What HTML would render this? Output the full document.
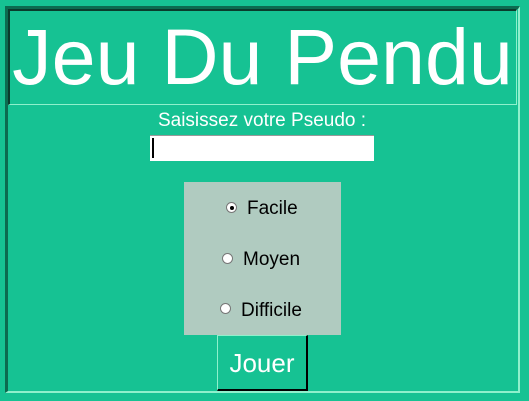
<!DOCTYPE html>
<html><head><style>
body{margin:0;width:529px;height:401px;background:#16c293;position:relative;overflow:hidden;font-family:"Liberation Sans",Arial,sans-serif}
.a{position:absolute;box-sizing:border-box}
</style></head><body>
<div class="a" style="left:5px;top:6px;width:515px;height:387px;border-top:3px solid #0c6b50;border-left:3px solid #0c6b50;border-right:2px solid #8ff0cc;border-bottom:2px solid #8ff0cc"></div>
<div class="a" style="left:8px;top:9px;width:509px;height:96px;border-top:2px solid #0a3b2c;border-left:2px solid #0a3b2c;border-right:1px solid #8ff0cc;border-bottom:1px solid #8ff0cc"></div>
<div class="a" style="left:8px;top:17px;width:509px;text-align:center;color:#fff;font-size:79px;line-height:79px;white-space:nowrap">Jeu Du Pendu</div>
<div class="a" style="left:0;top:110px;width:524px;text-align:center;color:#fff;font-size:19px;line-height:22px;white-space:nowrap">Saisissez votre Pseudo :</div>
<div class="a" style="left:150px;top:135px;width:224px;height:26px;background:#fff;border-top:1px solid #999"></div>
<div class="a" style="left:152px;top:138px;width:2px;height:20px;background:#000"></div>
<div class="a" style="left:184px;top:182px;width:157px;height:153px;background:#b0cbc0"></div>
<div class="a" style="left:226px;top:202px;width:11px;height:11px;border-radius:50%;background:#fff;border:1px solid #777"></div>
<div class="a" style="left:230px;top:206px;width:4px;height:4px;border-radius:50%;background:#000"></div>
<div class="a" style="left:247px;top:198px;font-size:19px;line-height:22px;color:#000">Facile</div>
<div class="a" style="left:222px;top:253px;width:11px;height:11px;border-radius:50%;background:#fff;border:1px solid #777"></div>
<div class="a" style="left:243px;top:249px;font-size:19px;line-height:22px;color:#000">Moyen</div>
<div class="a" style="left:220px;top:303px;width:11px;height:11px;border-radius:50%;background:#fff;border:1px solid #777"></div>
<div class="a" style="left:241px;top:300px;font-size:19px;line-height:22px;color:#000">Difficile</div>
<div class="a" style="left:217px;top:335px;width:91px;height:56px;border-left:1px solid #8ff0cc;border-top:1px solid #8ff0cc;border-right:2px solid #000;border-bottom:2px solid #000;color:#fff;font-size:26px;line-height:54px;text-align:center">Jouer</div>
</body></html>
